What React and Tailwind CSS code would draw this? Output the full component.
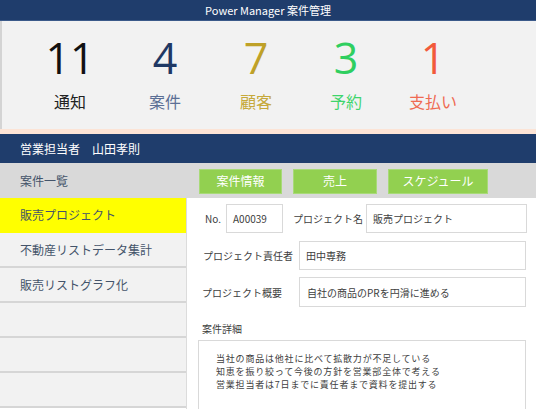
const stats = [
  { value: "11", label: "通知", num: "text-[#111111]", lab: "text-[#222222]", w: "w-[94px]" },
  { value: "4", label: "案件", num: "text-[#1f3864]", lab: "text-[#5b6f95]", w: "w-[96px]" },
  { value: "7", label: "顧客", num: "text-[#bfa128]", lab: "text-[#c6a93a]", w: "w-[86px]" },
  { value: "3", label: "予約", num: "text-[#2fcf60]", lab: "text-[#3fd56c]", w: "w-[94px]" },
  { value: "1", label: "支払い", num: "text-[#f25a3b]", lab: "text-[#ef6a52]", w: "w-[80px]" },
];

const projects = ["販売プロジェクト", "不動産リストデータ集計", "販売リストグラフ化", "", "", ""];

const tabs = [
  { name: "案件情報", w: "w-[83px]" },
  { name: "売上", w: "w-[84px]" },
  { name: "スケジュール", w: "w-[100px]" },
];

const font = "font-['Noto_Sans_CJK_JP','Noto_Sans',sans-serif]";

export default function App() {
  return (
    <div className={`w-[536px] h-[409px] overflow-hidden bg-white ${font}`}>
      {/* title */}
      <div className="h-[21px] bg-[#1f3d6c] border-b border-[#3b5a8a] flex items-center justify-center text-white text-[11px] leading-none">
        Power Manager 案件管理
      </div>

      {/* counters */}
      <div className="h-[108px] bg-[#f2f2f2] border-l-2 border-[#d4d4d4] flex pl-[21px] pt-[15px]">
        {stats.map((s) => (
          <div key={s.label} className={`${s.w} flex flex-col items-center`}>
            <span className={`font-['Open_Sans',sans-serif] text-[43px] leading-[43px] ${s.num}`}>
              {s.value}
            </span>
            <span className={`mt-[14px] text-[16px] leading-[16px] ${s.lab}`}>{s.label}</span>
          </div>
        ))}
      </div>
      <div className="h-[5px] bg-[#fce4d6]" />

      {/* sales rep */}
      <div className="h-[29px] bg-[#1f3d6c] flex items-center pl-[20px] text-white text-[12px]">
        営業担当者　山田孝則
      </div>

      {/* toolbar */}
      <div className="h-[35px] bg-[#d9d9d9] flex items-center">
        <div className="w-[199px] pl-[20px] text-[12px] text-[#44546a]">案件一覧</div>
        <div className="flex gap-[11px] pt-[1px]">
          {tabs.map((t) => (
            <div
              key={t.name}
              className={`${t.w} h-[25px] bg-[#92d050] border border-[#a8da78] flex items-center justify-center text-white text-[12px]`}
            >
              {t.name}
            </div>
          ))}
        </div>
      </div>

      <div className="flex">
        {/* sidebar */}
        <div className="w-[187px] shrink-0 border-r border-[#dcdcdc]">
          {projects.map((p, i) => (
            <div
              key={i}
              className={`h-[35px] flex items-center pl-[20px] text-[12px] text-[#44546a] border-b-2 border-[#d6d6d6] ${
                i === 0 ? "bg-[#ffff00] border-transparent h-[34px] border-b-0" : "bg-[#f2f2f2]"
              }`}
            >
              {p}
            </div>
          ))}
        </div>

        {/* form */}
        <div className="flex-1 text-[10px] text-[#404040] pt-[6px] whitespace-nowrap">
          <div className="flex items-center h-[29px]">
            <span className="ml-[18px] w-[21px]">No.</span>
            <div className="w-[57px] h-[29px] border border-[#d9d9d9] flex items-center pl-[6px]">A00039</div>
            <span className="ml-[10px] w-[73px]">プロジェクト名</span>
            <div className="w-[161px] h-[29px] border border-[#d9d9d9] flex items-center pl-[6px]">
              販売プロジェクト
            </div>
          </div>

          <div className="flex items-center h-[29px] mt-[8px]">
            <span className="ml-[16px] w-[96px]">プロジェクト責任者</span>
            <div className="w-[227px] h-[29px] border border-[#d9d9d9] flex items-center pl-[6px]">
              田中専務
            </div>
          </div>

          <div className="flex items-center h-[30px] mt-[7px]">
            <span className="ml-[15px] w-[97px]">プロジェクト概要</span>
            <div className="w-[227px] h-[30px] border border-[#d9d9d9] flex items-center pl-[7px]">
              自社の商品のPRを円滑に進める
            </div>
          </div>

          <div className="ml-[15px] mt-[15px] leading-[14px]">案件詳細</div>
          <div className="ml-[11px] mt-[4px] w-[328px] h-[80px] border border-[#d9d9d9] pl-[17px] pt-[11px] text-[9px] tracking-[0.8px] leading-[13.1px]">
            <div>当社の商品は他社に比べて拡散力が不足している</div>
            <div>知恵を振り絞って今後の方針を営業部全体で考える</div>
            <div>営業担当者は7日までに責任者まで資料を提出する</div>
          </div>
        </div>
      </div>
    </div>
  );
}
